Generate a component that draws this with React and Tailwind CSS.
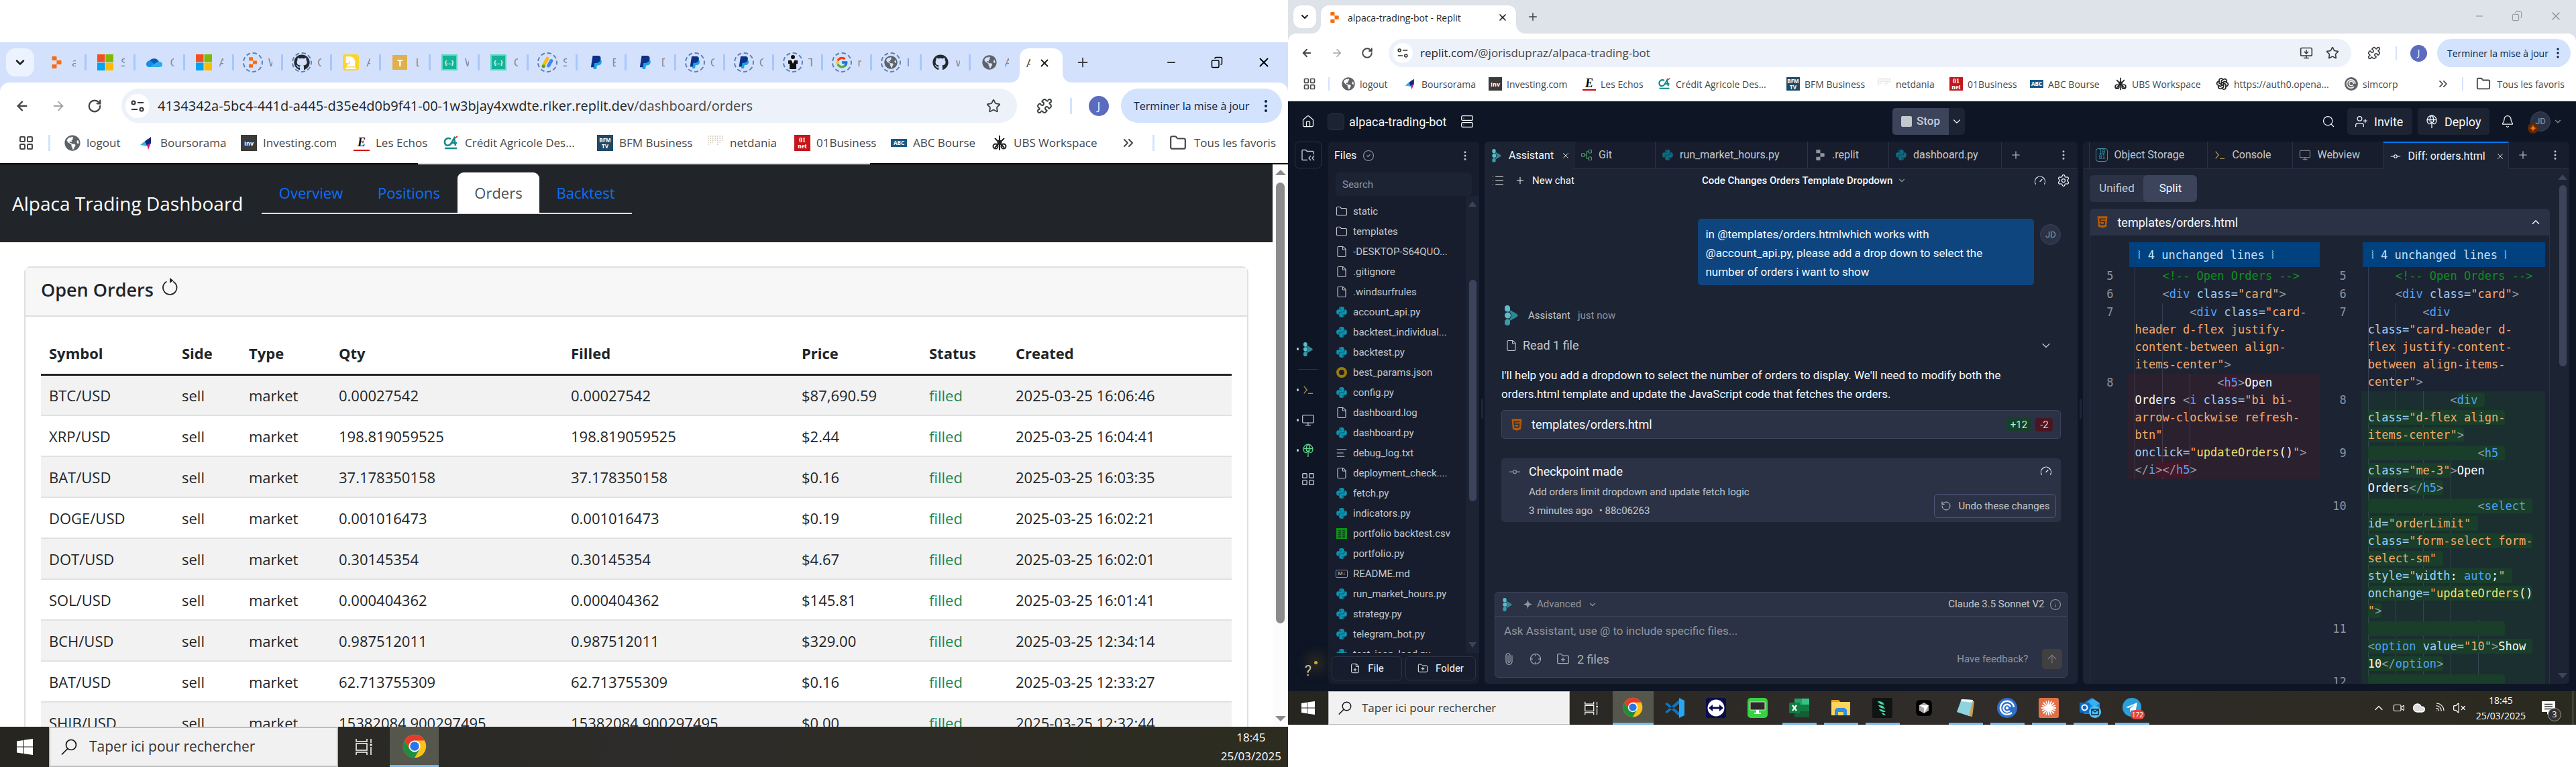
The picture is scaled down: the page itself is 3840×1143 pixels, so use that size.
import React from "react";
import {
  House, Search, UserPlus, Bell, ChevronDown, ChevronUp, Plus, X, Paperclip, Crosshair, FolderPlus,
  FilePlus, Star, Puzzle, Gauge, Settings, List, GitCommitHorizontal, RotateCcw, RotateCw, Info,
  ArrowUp, ArrowLeft, ArrowRight, Monitor, CircleCheck, Folder, File, LayoutGrid, MonitorDown, Minus,
  EllipsisVertical, Server, ChevronsRight, AlignLeft, Copy, Network, Wifi, VolumeX, Cloud, Video,
} from "lucide-react";
import { FaGithub, FaPython, FaHtml5, FaChessKnight, FaGlobeAmericas } from "react-icons/fa";
import { FcGoogle } from "react-icons/fc";
import { TbBrandOpenai } from "react-icons/tb";

/* ---------- drawings ---------- */

function ReplitLogo({ className }) {
  return (
    <svg viewBox="0 0 14 18" className={className} fill="currentColor" aria-hidden="true">
      <path d="M1 0h5a1 1 0 0 1 1 1v5H1a1 1 0 0 1-1-1V1a1 1 0 0 1 1-1zM7 6h6a1 1 0 0 1 1 1v4a1 1 0 0 1-1 1H7zM0 13a1 1 0 0 1 1-1h6v5a1 1 0 0 1-1 1H1a1 1 0 0 1-1-1z" />
    </svg>
  );
}

function AssistantLogo({ className }) {
  return (
    <svg viewBox="0 0 20 30" className={className} aria-hidden="true">
      <path fill="#5bbdcc" d="M0 4a4 4 0 0 1 8 0v3c0 2-2 2.600-4 2.600S0 8 0 6z" />
      <circle cx="4.500" cy="15" r="4.500" fill="#5bbdcc" />
      <path fill="#3c9aa9" d="M0 26a4 4 0 0 0 8 0v-3c0-2-2-2.600-4-2.600S0 22 0 24z" />
      <path fill="#2f8795" d="M9 7c2 3 9 4 11 8-2 4-9 5-11 8l-2-3c4-2 4-8 0-10z" />
    </svg>
  );
}

function MicrosoftLogo({ className }) {
  return (
    <svg viewBox="0 0 24 24" className={className} aria-hidden="true">
      <path fill="#f25022" d="M0 0h11.500v11.500H0z" />
      <path fill="#7fba00" d="M12.500 0H24v11.500H12.500z" />
      <path fill="#00a4ef" d="M0 12.500h11.500V24H0z" />
      <path fill="#ffb900" d="M12.500 12.500H24V24H12.500z" />
    </svg>
  );
}

function OneDriveLogo({ className }) {
  return (
    <svg viewBox="0 0 24 24" className={className} aria-hidden="true">
      <path fill="#0a5dbb" d="M4 12a8 8 0 0 1 15-1l-9 7z" />
      <path fill="#1a8de0" d="M0 15a5 5 0 0 1 7-5l10 9H4a4.500 4.500 0 0 1-4-4z" />
      <path fill="#2fa9ee" d="M24 15a4 4 0 0 1-4 4H5l12-8c4-1 7 1 7 4z" />
    </svg>
  );
}

function PaypalLogo({ className }) {
  return (
    <svg viewBox="0 0 20 22" className={className} aria-hidden="true">
      <path fill="#1da1e6" d="M7 6h9c3 1 3 4 2 7-1 2-3 3-6 3h-1l-1 6H5z" />
      <path fill="#0b3188" d="M4 0h8c4 0 6 2 5 6s-4 6-7 6H7l-1 7H1z" />
    </svg>
  );
}

function ChromeLogo({ className }) {
  return (
    <svg viewBox="0 0 48 48" className={className} aria-hidden="true">
      <circle cx="24" cy="24" r="23" fill="#fbc116" />
      <path fill="#e33b2e" d="M4.100 12.500A23 23 0 0 1 43.900 12.500H24L14 29.700z" />
      <path fill="#1e8e3e" d="M4.100 12.500 14 29.700 24 35.500l10-5.800-10 17.300A23 23 0 0 1 4.100 12.500z" />
      <circle cx="24" cy="24" r="11.500" fill="#fff" />
      <circle cx="24" cy="24" r="9" fill="#2a76e8" />
    </svg>
  );
}

function WindowsLogo({ className }) {
  return (
    <svg viewBox="0 0 24 24" className={className} fill="#fff" aria-hidden="true">
      <path d="M0 3.500 10 2v9.500H0zM11 1.800 24 0v11.500H11zM0 12.500h10V22L0 20.500zM11 12.500h13V24l-13-1.800z" />
    </svg>
  );
}

function TaskViewIcon({ className }) {
  return (
    <svg viewBox="0 0 26 26" className={className} fill="none" stroke="#fff" strokeWidth="1.500" aria-hidden="true">
      <path d="M1 1v4h16V1M1 8h16v10H1zM1 25v-4h16v4M23 1v6M23 13v12" />
      <path d="M21.500 10h3" strokeWidth="3" />
    </svg>
  );
}

function MagnifierIcon({ className }) {
  return (
    <svg viewBox="0 0 24 24" className={className} fill="none" stroke="#111" strokeWidth="1.700" aria-hidden="true">
      <circle cx="15" cy="9" r="7.500" />
      <path d="M10 14.500 1 23.500" />
    </svg>
  );
}

function SiteSettingsIcon({ className }) {
  return (
    <svg viewBox="0 0 20 20" className={className} fill="none" stroke="#303134" strokeWidth="2" aria-hidden="true">
      <circle cx="4" cy="5" r="2.500" />
      <path d="M10 5h9M1 15h9" />
      <circle cx="16" cy="15" r="2.500" />
    </svg>
  );
}

/* Curved feet on both sides of the active browser tab. */
function TabFeet() {
  return (
    <>
      <svg viewBox="0 0 14 14" className="absolute bottom-0 -left-[14px] size-[14px]" fill="#fff" aria-hidden="true"><path d="M14 0v14H0C8 14 14 8 14 0z" /></svg>
      <svg viewBox="0 0 14 14" className="absolute -right-[14px] bottom-0 size-[14px]" fill="#fff" aria-hidden="true"><path d="M0 0v14h14C6 14 0 8 0 0z" /></svg>
    </>
  );
}

function Ring({ children }) {
  return (
    <span className="grid size-[30px] place-items-center rounded-full border-2 border-dashed border-[#5f7fb5]">
      {children}
    </span>
  );
}

function BoursoramaIcon({ className }) {
  return (
    <svg viewBox="0 0 24 24" className={className} aria-hidden="true">
      <path fill="#2fb4e9" d="M3 15 15 5v12z" />
      <path fill="#17257c" d="M10 10 19 3v10l-6 3z" />
      <path fill="#e5197f" d="m13 15 6-3-4 10z" />
    </svg>
  );
}

function InvestingIcon() {
  return <span className="grid size-full place-items-center bg-[#3a3a3a] text-[9px] leading-none font-bold text-white">Inv</span>;
}
function EchosIcon() {
  return <span className="grid size-full place-items-center border-b-2 border-[#d40012] font-['Liberation_Serif',serif] text-[18px] leading-none font-bold text-black italic">E</span>;
}
function AgricoleIcon({ className }) {
  return (
    <svg viewBox="0 0 24 24" className={className} fill="none" aria-hidden="true">
      <path stroke="#138a85" strokeWidth="2.500" d="M12 6C7 3 2 7 3 12s7 5 10 0l4-7 2 11M12 12h9M3 20h18" />
      <path stroke="#e5333a" strokeWidth="2" d="m18 5 4-3" />
    </svg>
  );
}
function BfmIcon() {
  return (
    <span className="flex size-full flex-col items-center justify-center bg-[#1f4a66] text-[8px] leading-[9px] font-bold text-white">
      <span>BFM</span>
      <span>TV</span>
    </span>
  );
}
function NetdaniaIcon({ className }) {
  return (
    <svg viewBox="0 0 24 24" className={className} stroke="#c9c0ac" strokeWidth="1.500" strokeDasharray="1.500 2" aria-hidden="true">
      <path d="M0 2h24M0 5h24M0 8h24M0 11h8M14 11h6M0 14h4M14 14h3" />
    </svg>
  );
}
function NetIcon() {
  return (
    <span className="flex size-full flex-col items-center justify-center bg-[#c4161c] font-['Liberation_Serif',serif] text-[10px] leading-[9px] font-bold text-white">
      <span>01</span>
      <span>net</span>
    </span>
  );
}
function AbcIcon() {
  return <span className="grid h-3 w-full place-items-center bg-[#165a8c] text-[8px] leading-none font-bold text-white">ABC</span>;
}
function UbsIcon({ className }) {
  return (
    <svg viewBox="0 0 24 24" className={className} fill="none" stroke="#222" strokeWidth="2" aria-hidden="true">
      <path d="M12 1v22M5 5l14 14M19 5 5 19" />
      <circle cx="6" cy="17" r="3.500" />
      <circle cx="18" cy="17" r="3.500" />
      <circle cx="12" cy="11" r="2.500" />
    </svg>
  );
}
function SimcorpIcon({ className }) {
  return (
    <svg viewBox="0 0 24 24" className={className} fill="none" stroke="#eee" strokeWidth="2" aria-hidden="true">
      <circle cx="12" cy="12" r="12" fill="#5f6063" stroke="none" />
      <path d="M17 17a7.500 7.500 0 1 1 2-5M15 14a4 4 0 1 1 1-2M12 12h0" />
    </svg>
  );
}
function GlobeIcon({ className }) {
  return <FaGlobeAmericas className={className} color="#5f6368" aria-hidden="true" />;
}
function TealCode() {
  return <span className="grid size-6 place-items-center border-2 border-[#58dcbf] bg-[#14b398] text-[8px] font-bold text-white">{"{…}"}</span>;
}
function AdsIcon() {
  return (
    <svg viewBox="0 0 24 24" className="size-5" fill="none" strokeWidth="6" strokeLinecap="round" aria-hidden="true">
      <path stroke="#fbbc04" d="M5 18 12 5" />
      <path stroke="#4285f4" d="m14 18 5-9" />
      <circle cx="5" cy="19" r="3" fill="#34a853" />
    </svg>
  );
}
function SuitIcon() {
  return (
    <svg viewBox="0 0 24 24" className="size-6" fill="#111" aria-hidden="true">
      <circle cx="12" cy="4" r="3" />
      <path d="M5 9h14v5h-2v8H7v-8H5z" />
      <path fill="#fff" d="m10 9 2 5 2-5z" />
    </svg>
  );
}
function Dots({ className }) {
  return <EllipsisVertical className={className} aria-hidden="true" />;
}

/* ---------- shared browser parts ---------- */

const GLYPH = {
  globe: GlobeIcon, bourse: BoursoramaIcon, inv: InvestingIcon, echos: EchosIcon, ca: AgricoleIcon,
  bfm: BfmIcon, netdania: NetdaniaIcon, net: NetIcon, abc: AbcIcon, ubs: UbsIcon,
  openai: ({ className }) => <TbBrandOpenai className={className} color="#222" />, simcorp: SimcorpIcon,
};

function Bookmark({ label, icon, width, large }) {
  const Icon = GLYPH[icon];
  return (
    <a href="#" className={`${width} flex shrink-0 items-center whitespace-nowrap ${large ? "gap-[9px]" : "gap-[7px]"}`}>
      <span className={`flex shrink-0 items-center justify-center ${large ? "size-6" : "size-5"}`}>
        <Icon className={large ? "size-6" : "size-5"} />
      </span>
      {label}
    </a>
  );
}

const LEFT_MARKS = [
  ["logout", "globe", "w-[110px]"], ["Boursorama", "bourse", "w-[153px]"], ["Investing.com", "inv", "w-[168px]"],
  ["Les Echos", "echos", "w-[133px]"], ["Crédit Agricole Des...", "ca", "w-[230px]"], ["BFM Business", "bfm", "w-[165px]"],
  ["netdania", "netdania", "w-[129px]"], ["01Business", "net", "w-[144px]"], ["ABC Bourse", "abc", "w-[150px]"],
  ["UBS Workspace", "ubs", "w-[160px]"],
];
const RIGHT_MARKS = [
  ["logout", "globe", "w-[92px]"], ["Boursorama", "bourse", "w-[127px]"], ["Investing.com", "inv", "w-[140px]"],
  ["Les Echos", "echos", "w-[112px]"], ["Crédit Agricole Des...", "ca", "w-[192px]"], ["BFM Business", "bfm", "w-[136px]"],
  ["netdania", "netdania", "w-[107px]"], ["01Business", "net", "w-[120px]"], ["ABC Bourse", "abc", "w-[125px]"],
  ["UBS Workspace", "ubs", "w-[152px]"], ["https://auth0.opena...", "openai", "w-[192px]"], ["simcorp", "simcorp", "w-[90px]"],
];

/* ---------- left window ---------- */

const TABS = [
  [<ReplitLogo className="h-[18px] w-[15px] text-[#fd6a0a]" />, "a"],
  [<MicrosoftLogo className="size-6" />, "S"],
  [<OneDriveLogo className="size-6" />, "O"],
  [<MicrosoftLogo className="size-6" />, "A"],
  [<Ring><ReplitLogo className="h-4 w-3 text-[#fd6a0a]" /></Ring>, "W"],
  [<Ring><FaGithub className="size-6" color="#24292f" /></Ring>, "O"],
  [<span className="grid size-6 place-items-center rounded bg-[#fcd527]"><FaChessKnight className="size-5" color="#fff" /></span>, "A"],
  [<span className="grid size-[22px] place-items-center bg-[#dfb04d] text-[14px] font-bold text-white">T</span>, "L"],
  [<TealCode />, "W"],
  [<TealCode />, "O"],
  [<Ring><AdsIcon /></Ring>, "S"],
  [<PaypalLogo className="size-5" />, "E"],
  [<PaypalLogo className="size-5" />, "D"],
  [<Ring><PaypalLogo className="size-[18px]" /></Ring>, "O"],
  [<Ring><PaypalLogo className="size-[18px]" /></Ring>, "O"],
  [<Ring><SuitIcon /></Ring>, "T"],
  [<Ring><FcGoogle className="size-5" /></Ring>, "r"],
  [<Ring><GlobeIcon className="size-5" /></Ring>, "I"],
  [<FaGithub className="size-6" color="#24292f" />, "w"],
  [<GlobeIcon className="size-[22px]" />, "A"],
];

const ORDERS = [
  ["BTC/USD", "0.00027542", "$87,690.59", "2025-03-25 16:06:46"],
  ["XRP/USD", "198.819059525", "$2.44", "2025-03-25 16:04:41"],
  ["BAT/USD", "37.178350158", "$0.16", "2025-03-25 16:03:35"],
  ["DOGE/USD", "0.001016473", "$0.19", "2025-03-25 16:02:21"],
  ["DOT/USD", "0.30145354", "$4.67", "2025-03-25 16:02:01"],
  ["SOL/USD", "0.000404362", "$145.81", "2025-03-25 16:01:41"],
  ["BCH/USD", "0.987512011", "$329.00", "2025-03-25 12:34:14"],
  ["BAT/USD", "62.713755309", "$0.16", "2025-03-25 12:33:27"],
  ["SHIB/USD", "15382084.900297495", "$0.00", "2025-03-25 12:32:44"],
];

function LeftBrowser() {
  return (
    <header className="shrink-0 bg-[#d3e1fd] text-[#3c4043]">
      <div className="flex h-[60px] items-center pl-[9px]">
        <button aria-label="Search tabs" className="mr-[5px] grid size-[42px] shrink-0 place-items-center rounded-[14px] bg-[#ecf2fe]">
          <ChevronDown className="size-5 text-[#1f1f1f]" strokeWidth={3} />
        </button>
        <div className="flex min-w-0 flex-1 items-center">
          {TABS.map(([icon, letter], i) => (
            <button key={i} className="flex h-6 min-w-0 flex-1 items-center border-r-[3px] border-[#a8c7fa] pl-[13px] last:border-transparent">
              <span className="flex w-[30px] shrink-0 justify-center">{icon}</span>
              <span className="ml-2 w-[6px] overflow-hidden text-left text-[17px] leading-6 text-[#7a8599]">{letter}</span>
            </button>
          ))}
        </div>
        <button className="relative mt-[9px] flex h-[51px] w-16 shrink-0 items-center gap-3 rounded-t-[14px] bg-white pb-2 pl-[10px]">
          <TabFeet />
          <span className="w-[6px] overflow-hidden text-[17px]">A</span>
          <X className="size-[18px] text-[#1f1f1f]" strokeWidth={2.500} />
        </button>
        <button aria-label="New tab" className="mr-[112px] ml-[19px] shrink-0"><Plus className="size-[22px]" /></button>
        <div className="flex shrink-0 items-center gap-[50px] pr-[25px] text-black">
          <button aria-label="Minimize"><Minus className="size-[18px]" /></button>
          <button aria-label="Restore"><Copy className="size-[18px] -scale-x-100" /></button>
          <button aria-label="Close"><X className="size-[22px]" /></button>
        </div>
      </div>
      <div className="rounded-t-[14px] bg-white">
        <div className="flex items-center pt-[9px] pl-[22px]">
          <div className="flex shrink-0 items-center gap-8 text-[#474747]">
            <button aria-label="Back"><ArrowLeft className="size-[22px]" strokeWidth={2.500} /></button>
            <button aria-label="Forward"><ArrowRight className="size-[22px] text-[#a5a5a5]" /></button>
            <button aria-label="Reload"><RotateCw className="size-[22px]" strokeWidth={2.500} /></button>
          </div>
          <div className="ml-[29px] flex h-[51px] min-w-0 flex-1 items-center rounded-full bg-[#ecf1fa] pr-6 pl-[6px]">
            <span className="grid size-9 shrink-0 place-items-center rounded-full bg-white"><SiteSettingsIcon className="size-5" /></span>
            <p className="ml-3 min-w-0 flex-1 text-[20px] whitespace-nowrap text-[#474747]">
              <span className="text-[#1f1f1f]">4134342a-5bc4-441d-a445-d35e4d0b9f41-00-1w3bjay4xwdte.riker.replit.dev</span>/dashboard/orders
            </p>
            <Star className="size-[22px]" />
          </div>
          <Puzzle className="mr-[26px] ml-[29px] size-6 shrink-0" />
          <span className="mr-[25px] h-6 w-[3px] shrink-0 bg-[#d3e3fd]" />
          <button aria-label="Profile" className="mr-[18px] size-[30px] shrink-0 rounded-full bg-[#5c6bc0] text-[16px] text-white">J</button>
          <button className="mr-[9px] flex h-[51px] w-60 shrink-0 items-center justify-between rounded-full bg-[#d3e3fd] pr-3 pl-[19px] text-[16px] whitespace-nowrap text-[#041e49]">
            Terminer la mise à jour <Dots className="size-6" />
          </button>
        </div>
        <nav className="flex h-[60px] items-center overflow-hidden pl-[27px] text-[17px] text-[#474747]">
          <LayoutGrid className="size-6 shrink-0" />
          <span className="mr-[21px] ml-[21px] h-6 w-[3px] shrink-0 bg-[#d3e3fd]" />
          {LEFT_MARKS.map(([l, i, w]) => <Bookmark key={l} label={l} icon={i} width={w} large />)}
          <button aria-label="More bookmarks" className="ml-auto shrink-0"><ChevronsRight className="size-6" /></button>
          <span className="mr-[22px] ml-6 h-6 w-[3px] shrink-0 bg-[#d3e3fd]" />
          <a href="#" className="mr-[18px] flex shrink-0 items-center gap-[11px] whitespace-nowrap"><Folder className="size-[26px]" />Tous les favoris</a>
        </nav>
        <div className="flex h-[2px]">
          <span className="w-[623px] bg-black" />
          <span className="w-[674px] bg-[#e4e4e4]" />
          <span className="flex-1 bg-black" />
        </div>
      </div>
    </header>
  );
}

function Dashboard() {
  return (
    <div className="flex min-h-0 flex-1">
      <div className="min-w-0 flex-1 overflow-hidden bg-white text-[#212529]">
        <div className="flex h-[116px] items-start bg-[#212529] pt-3 pl-[18px]">
          <a href="#" className="w-[372px] pt-[25px] text-[28px] leading-[42px] whitespace-nowrap text-white">Alpaca Trading Dashboard</a>
          <nav className="flex h-[62px] border-b-2 border-[#dee2e6] text-[22px] text-[#0d6efd]">
            <a href="#" className="grid w-[147px] place-items-center">Overview</a>
            <a href="#" className="grid w-[145px] place-items-center">Positions</a>
            <a href="#" aria-current="page" className="grid w-[122px] place-items-center rounded-t-[9px] bg-white text-[#495057]">Orders</a>
            <a href="#" className="grid w-[138px] place-items-center">Backtest</a>
          </nav>
        </div>
        <section className="mx-9 mt-9 rounded-[9px] border-2 border-[#dfdfdf]">
          <div className="flex h-[73px] gap-3 border-b-2 border-[#dfdfdf] bg-[#f7f7f7] pt-3 pl-[23px]">
            <h1 className="text-[27px] leading-[42px] font-semibold">Open Orders</h1>
            <button aria-label="Refresh orders" className="h-8">
              <svg viewBox="0 0 24 26" className="h-[26px] w-6" fill="none" stroke="#212529" strokeWidth="1.800">
                <path d="M7.500 5.500a10.300 10.300 0 1 0 9.500 0M12 4h4" />
                <path d="m12 0 5.500 4-5.500 4z" fill="#212529" stroke="none" />
              </svg>
            </button>
          </div>
          <div className="p-[23px]">
            <table className="w-full table-fixed text-left text-[22px] leading-9">
              <colgroup>
                <col className="w-[198px]" /><col className="w-[100px]" /><col className="w-[134px]" /><col className="w-[346px]" />
                <col className="w-[344px]" /><col className="w-[190px]" /><col className="w-[129px]" /><col />
              </colgroup>
              <thead>
                <tr className="h-[63px] border-b-3 border-[#212529]">
                  {["Symbol", "Side", "Type", "Qty", "Filled", "Price", "Status", "Created"].map((h) => (
                    <th key={h} scope="col" className="px-3 font-bold">{h}</th>
                  ))}
                </tr>
              </thead>
              <tbody>
                {ORDERS.map(([sym, qty, price, date], i) => (
                  <tr key={i} className="h-[61px] border-b-2 border-[#dee2e6] whitespace-nowrap odd:bg-[#f2f2f2]">
                    <td className="px-3">{sym}</td>
                    <td className="px-3">sell</td>
                    <td className="px-3">market</td>
                    <td className="px-3">{qty}</td>
                    <td className="px-3">{qty}</td>
                    <td className="px-3">{price}</td>
                    <td className="px-3 text-[#198754]">filled</td>
                    <td className="px-3">{date}</td>
                  </tr>
                ))}
              </tbody>
            </table>
          </div>
        </section>
      </div>
      <div className="flex w-[23px] flex-col items-center bg-[#fcfcfc] py-2">
        <span className="size-0 border-x-8 border-b-8 border-x-transparent border-b-[#8b8b8b]" />
        <span className="mt-[11px] h-[657px] w-[13px] rounded-full bg-[#8b8b8b]" />
        <span className="mt-auto size-0 border-x-8 border-t-8 border-x-transparent border-t-[#8b8b8b]" />
      </div>
    </div>
  );
}

function LeftTaskbar() {
  return (
    <footer className="flex h-[60px] shrink-0 items-stretch bg-linear-to-r from-[#26251f] via-[#2e2c2a] via-50% to-[#2d2c20] text-white">
      <button aria-label="Start" className="grid w-[73px] place-items-center"><WindowsLogo className="size-6" /></button>
      <label className="flex w-[431px] items-center gap-[18px] border-2 border-[#bdbdbd] bg-[#f1f1f1] pl-4">
        <MagnifierIcon className="size-6 shrink-0" />
        <input aria-label="Taper ici pour rechercher" placeholder="Taper ici pour rechercher" className="min-w-0 flex-1 text-[21px] text-black outline-none placeholder:text-[#333]" />
      </label>
      <button aria-label="Task view" className="grid w-[77px] place-items-center"><TaskViewIcon className="size-[26px]" /></button>
      <button aria-label="Chrome" className="grid w-[73px] place-items-center border-b-[3px] border-[#76b9ed] bg-[#55564c]"><ChromeLogo className="size-9" /></button>
      <div className="mr-[10px] ml-auto flex flex-col items-center justify-center text-[17px] leading-[28px]">
        <span>18:45</span>
        <span>25/03/2025</span>
      </div>
    </footer>
  );
}

/* ---------- right window ---------- */

function RightBrowser() {
  return (
    <header className="shrink-0 bg-[#dee2e9] text-[#3c4043]">
      <div className="flex h-[50px] items-end pl-2">
        <button aria-label="Search tabs" className="mr-[7px] mb-2 grid size-[34px] shrink-0 place-items-center rounded-xl bg-white">
          <ChevronDown className="size-4 text-[#1f1f1f]" strokeWidth={3} />
        </button>
        <button className="relative flex h-[42px] w-[291px] shrink-0 items-center rounded-t-xl bg-white pr-3 pb-[6px] pl-[14px] text-[14px] text-[#1f1f1f]">
          <TabFeet />
          <ReplitLogo className="mr-[13px] h-4 w-[13px] text-[#fd6a0a]" />
          <span className="whitespace-nowrap">alpaca-trading-bot - Replit</span>
          <X className="ml-auto size-4" strokeWidth={2.500} />
        </button>
        <button aria-label="New tab" className="mb-4 ml-4"><Plus className="size-[18px]" /></button>
        <div className="mr-5 mb-4 ml-auto flex items-center gap-10 text-[#8b8e93]">
          <button aria-label="Minimize"><Minus className="size-4" strokeWidth={1.500} /></button>
          <button aria-label="Restore"><Copy className="size-4 -scale-x-100" strokeWidth={1.500} /></button>
          <button aria-label="Close"><X className="size-5" strokeWidth={1.500} /></button>
        </div>
      </div>
      <div className="rounded-t-xl bg-white">
        <div className="flex items-center pt-2 pl-[19px]">
          <div className="flex shrink-0 items-center gap-[27px] text-[#474747]">
            <button aria-label="Back"><ArrowLeft className="size-[18px]" strokeWidth={2.500} /></button>
            <button aria-label="Forward"><ArrowRight className="size-[18px] text-[#a5a5a5]" /></button>
            <button aria-label="Reload"><RotateCw className="size-[18px]" strokeWidth={2.500} /></button>
          </div>
          <div className="ml-[23px] flex h-[42px] min-w-0 flex-1 items-center rounded-full bg-[#ecf1fa] pr-[18px] pl-[6px]">
            <span className="grid size-[30px] shrink-0 place-items-center rounded-full bg-white"><SiteSettingsIcon className="size-4" /></span>
            <p className="ml-[11px] min-w-0 flex-1 text-[17px] whitespace-nowrap text-[#474747]">
              <span className="text-[#1f1f1f]">replit.com</span>/@jorisdupraz/alpaca-trading-bot
            </p>
            <MonitorDown className="mr-[19px] size-5" />
            <Star className="size-5" />
          </div>
          <Puzzle className="mr-[22px] ml-6 size-5 shrink-0" />
          <span className="mr-[20px] h-5 w-[2px] shrink-0 bg-[#d3e3fd]" />
          <button aria-label="Profile" className="mr-[15px] size-[25px] shrink-0 rounded-full bg-[#5c6bc0] text-[13px] text-white">J</button>
          <button className="mr-2 flex h-[42px] w-[199px] shrink-0 items-center justify-between rounded-full bg-[#d3e3fd] pr-[9px] pl-[15px] text-[14px] whitespace-nowrap text-[#041e49]">
            Terminer la mise à jour <Dots className="size-5" />
          </button>
        </div>
        <nav className="flex h-[51px] items-center overflow-hidden border-b border-[#dfe4e4] pl-[22px] text-[14px] text-[#474747]">
          <LayoutGrid className="size-5 shrink-0" />
          <span className="mr-[18px] ml-[18px] h-5 w-[2px] shrink-0 bg-[#d3e3fd]" />
          {RIGHT_MARKS.map(([l, i, w]) => <Bookmark key={l} label={l} icon={i} width={w} />)}
          <button aria-label="More bookmarks" className="ml-auto shrink-0"><ChevronsRight className="size-5" /></button>
          <span className="mr-[19px] ml-[18px] h-5 w-[2px] shrink-0 bg-[#d3e3fd]" />
          <a href="#" className="mr-[17px] flex shrink-0 items-center gap-[9px] whitespace-nowrap"><Folder className="size-[22px]" />Tous les favoris</a>
        </nav>
      </div>
    </header>
  );
}

function WorkspaceHeader() {
  return (
    <div className="flex h-[60px] shrink-0 items-center pr-5 pl-5 text-[18px]">
      <a href="#" aria-label="Home"><House className="size-5" strokeWidth={1.500} /></a>
      <span className="ml-[19px] size-[25px] rounded-[5px] border border-[#2b3245] bg-[#1c2333]" />
      <span className="ml-[7px] w-[147px] whitespace-nowrap">alpaca-trading-bot</span>
      <Server className="ml-[19px] size-5" strokeWidth={1.500} />
      <div className="ml-[624px] flex h-10 items-stretch overflow-hidden rounded-[5px]">
        <button className="flex w-[84px] items-center gap-[7px] bg-[#3c445c] pl-[13px] text-[17px] font-medium text-[#c9ced3]">
          <span className="size-4 rounded-[2px] bg-[#c2c8cc]" />Stop
        </button>
        <button aria-label="Run options" className="grid w-6 place-items-center bg-[#1c2333]"><ChevronDown className="size-[18px]" strokeWidth={1.500} /></button>
      </div>
      <button aria-label="Search" className="ml-auto"><Search className="size-5" strokeWidth={1.500} /></button>
      <button className="ml-[18px] flex h-10 w-[97px] items-center gap-[9px] rounded-[5px] bg-[#1c2333] pl-[11px]"><UserPlus className="size-5" strokeWidth={1.500} />Invite</button>
      <button className="ml-2 flex h-10 w-[107px] items-center gap-[9px] rounded-[5px] bg-[#1c2333] pl-[11px]"><DeployIcon className="size-5" />Deploy</button>
      <button aria-label="Notifications" className="ml-[17px]"><Bell className="size-5" strokeWidth={1.500} /></button>
      <button aria-label="Account" className="relative ml-6 flex items-center gap-1 text-[#8f959d]">
        <span className="grid size-[30px] place-items-center rounded-full border border-[#3c445c] bg-[#2b3245] text-[13px]">JD</span>
        <span className="absolute top-[17px] -left-1 grid size-4 place-items-center rounded-full bg-[#5a2a06]"><Sparkle className="size-3 text-[#ff6a1a]" /></span>
        <ChevronDown className="size-[14px]" />
      </button>
    </div>
  );
}

function Sparkle({ className }) {
  return (
    <svg viewBox="0 0 20 20" className={className} fill="currentColor" aria-hidden="true">
      <path d="M10 0c.6 6.500 3.500 9.400 10 10-6.500.6-9.400 3.500-10 10-.6-6.500-3.500-9.400-10-10C6.500 9.400 9.400 6.500 10 0z" />
    </svg>
  );
}

function DeployIcon({ className }) {
  return (
    <svg viewBox="0 0 20 20" className={className} fill="none" stroke="currentColor" strokeWidth="1.300" aria-hidden="true">
      <path d="M6 14A7 7 0 1 1 14 14M3.500 7.500h13M10 1c-3 3-3 7-2.500 10M10 1c3 3 3 7 2.500 10M10 20v-9M6.500 14 10 10.500l3.500 3.500" />
    </svg>
  );
}

function ConsoleIcon({ className }) {
  return (
    <svg viewBox="0 0 18 18" className={className} fill="none" stroke="#a8904e" strokeWidth="1.500" aria-hidden="true">
      <path d="m2 3 5 6-5 6M9 15h8" />
    </svg>
  );
}

function StorageIcon({ className }) {
  return (
    <span className={`${className} flex flex-col items-center justify-center rounded border border-[#3c93a3] font-['DejaVu_Sans_Mono',monospace] text-[8px] leading-[8px] text-[#3c93a3]`}>
      <span>10</span>
      <span>01</span>
    </span>
  );
}

const FILES = [
  ["static", "dir"], ["templates", "dir"], ["-DESKTOP-S64QUO...", "file"], [".gitignore", "file"], [".windsurfrules", "file"],
  ["account_api.py", "py"], ["backtest_individual...", "py"], ["backtest.py", "py"], ["best_params.json", "json"], ["config.py", "py"],
  ["dashboard.log", "file"], ["dashboard.py", "py"], ["debug_log.txt", "txt"], ["deployment_check....", "file"], ["fetch.py", "py"],
  ["indicators.py", "py"], ["portfolio backtest.csv", "csv"], ["portfolio.py", "py"], ["README.md", "md"], ["run_market_hours.py", "py"],
  ["strategy.py", "py"], ["telegram_bot.py", "py"], ["test_json_load.py", "py"],
];

function FileGlyph({ kind }) {
  if (kind === "dir") return <Folder className="size-5" strokeWidth={1.500} />;
  if (kind === "py") return <FaPython className="size-[18px]" color="#0a94b0" />;
  if (kind === "txt") return <AlignLeft className="size-[18px]" strokeWidth={1.500} />;
  if (kind === "json") return <span className="size-4 rounded-full border-4 border-[#9c7c0a]" />;
  if (kind === "csv")
    return (
      <svg viewBox="0 0 16 16" className="size-4" aria-hidden="true">
        <path fill="#0a9414" d="M0 0h16v16H0z" />
        <path stroke="#0d3a1a" strokeWidth="1.500" d="M3 4h4M9 4h4M3 7h4M9 7h4M3 10h4M9 10h4M3 13h4M9 13h4" />
      </svg>
    );
  if (kind === "md") return <span className="grid h-3 w-[18px] place-items-center rounded-[2px] border border-[#8f959d] text-[8px] leading-none">M↓</span>;
  return <File className="size-5" strokeWidth={1.500} />;
}

function RailLink({ label, first, children }) {
  return (
    <a href="#" aria-label={label} className={`${first ? "" : "mt-[15px]"} flex h-[30px] w-full items-center pl-[13px]`}>
      <span className="h-1 w-[3px] rounded-full bg-[#c2c8cc]" />
      <span className="flex w-7 justify-center">{children}</span>
    </a>
  );
}

function Rail() {
  return (
    <nav className="flex w-[60px] shrink-0 flex-col items-center text-[#c2c8cc]">
      <button aria-label="Collapse files" className="mb-[239px] grid size-10 shrink-0 place-items-center rounded-md border border-[#2b3245]">
        <svg viewBox="0 0 20 20" className="size-5" fill="none" stroke="currentColor" strokeWidth="1.400" aria-hidden="true">
          <path d="M9 17.500H2a1 1 0 0 1-1-1v-13a1 1 0 0 1 1-1h4.500l2 2H17a1 1 0 0 1 1 1V9M14 11l-3 3.500 3 3.500M19 11l-3 3.500 3 3.500" />
        </svg>
      </button>
      <RailLink label="Assistant"><AssistantLogo className="h-[21px] w-[14px]" /></RailLink>
      <span className="my-[15px] h-px w-[30px] bg-[#2b3245]" />
      <RailLink label="Console" first><ConsoleIcon className="size-[16px]" /></RailLink>
      <RailLink label="Webview"><Monitor className="size-5" strokeWidth={1.500} /></RailLink>
      <RailLink label="Deployments"><DeployIcon className="size-5 text-[#5ed58a]" /></RailLink>
      <a href="#" aria-label="All tools" className="mt-[13px] grid size-[30px] place-items-center"><LayoutGrid className="size-[22px]" strokeWidth={1.500} /></a>
      <button aria-label="Help" className="relative mt-auto mb-[6px] text-[22px] leading-[26px]">
        ?
        <span className="absolute -top-[2px] left-[14px] size-[5px] rounded-full bg-[#d0ab2b] shadow-[0_0_20px_8px_rgba(150,120,20,0.35)]" />
      </button>
    </nav>
  );
}

function FilesPanel() {
  return (
    <aside className="flex w-[225px] shrink-0 flex-col rounded-md bg-[#171d2d] text-[15px] text-[#c2c8cc]">
      <div className="flex h-[42px] shrink-0 items-center pr-3 pl-[9px]">
        <h2 className="text-[16px] text-[#f5f9fc]">Files</h2>
        <CircleCheck className="ml-[9px] size-[18px] text-[#8f959d]" strokeWidth={1.500} />
        <button aria-label="Files menu" className="ml-auto"><Dots className="size-[18px]" /></button>
      </div>
      <input type="search" aria-label="Search files" placeholder="Search" className="mx-[11px] mt-1 h-[35px] shrink-0 rounded-md bg-[#1c2333] px-[10px] outline-none placeholder:text-[#8f959d]" />
      <div className="flex min-h-0 flex-1">
        <ul className="min-w-0 flex-1 overflow-hidden pt-2 pl-[11px]">
          {FILES.map(([name, kind]) => (
            <li key={name} className="flex h-[30px] items-center gap-2 whitespace-nowrap">
              <span className="flex w-[18px] shrink-0 justify-center"><FileGlyph kind={kind} /></span>
              {name}
            </li>
          ))}
        </ul>
        <div className="flex w-5 flex-col items-center bg-[#1c2333] py-2">
          <span className="size-0 border-x-[6px] border-b-8 border-x-transparent border-b-[#3c445c]" />
          <span className="mt-[109px] h-[330px] w-[11px] rounded-full bg-[#3c445c]" />
          <span className="mt-auto size-0 border-x-[6px] border-t-8 border-x-transparent border-t-[#3c445c]" />
        </div>
      </div>
      <div className="flex shrink-0 gap-[5px] p-[5px] text-[15px] text-[#f5f9fc]">
        <button className="flex h-9 flex-1 items-center justify-center gap-[11px] rounded-md border border-[#2b3245]"><FilePlus className="size-4" strokeWidth={1.500} />File</button>
        <button className="flex h-9 flex-1 items-center justify-center gap-[11px] rounded-md border border-[#2b3245]"><FolderPlus className="size-4" strokeWidth={1.500} />Folder</button>
      </div>
    </aside>
  );
}

function Splitter() {
  return (
    <div className="grid w-2 shrink-0 place-items-center pb-[12px]"><span className="h-[30px] w-[3px] rounded-full bg-[#1f2638]" /></div>
  );
}

function PaneTab({ width, icon, label, active, line }) {
  const tone = active ? "bg-[#1c2333] text-[#f5f9fc]" : "border-b bg-[#171d2d] text-[#c2c8cc]";
  const top = line ? "border-t-2 border-t-[#0079f2]" : "";
  return (
    <button className={`${width} ${tone} ${top} flex h-full shrink-0 items-center gap-[9px] overflow-hidden border-r border-[#2b3245] pl-[9px] whitespace-nowrap`}>
      <span className="flex w-[18px] shrink-0 justify-center">{icon}</span>
      {label}
      {active && <X className="mr-[5px] ml-auto size-[14px] shrink-0" strokeWidth={1.500} />}
    </button>
  );
}

function PaneTabsEnd() {
  return (
    <div className="flex flex-1 items-center justify-between border-b border-[#2b3245] bg-[#171d2d] px-3 text-[#c2c8cc]">
      <button aria-label="New tab"><Plus className="size-[18px]" strokeWidth={1.500} /></button>
      <button aria-label="Pane menu"><Dots className="size-[18px]" /></button>
    </div>
  );
}

function AssistantPane() {
  return (
    <section className="flex min-w-0 flex-[885] flex-col overflow-hidden rounded-md bg-[#1c2333]">
      <div className="flex h-[41px] shrink-0 text-[16px]">
        <PaneTab width="w-[134px]" active icon={<AssistantLogo className="h-5 w-[14px]" />} label="Assistant" />
        <PaneTab width="w-[121px]" icon={<Network className="size-[18px] -rotate-90 text-[#4b9a63]" strokeWidth={1.500} />} label="Git" />
        <PaneTab width="w-[227px]" icon={<FaPython className="size-[18px]" color="#0d6b80" />} label="run_market_hours.py" />
        <PaneTab width="w-[121px]" icon={<ReplitLogo className="h-4 w-[13px] text-[#8f959d]" />} label=".replit" />
        <PaneTab width="w-[168px]" icon={<FaPython className="size-[18px]" color="#0d6b80" />} label="dashboard.py" />
        <PaneTabsEnd />
      </div>
      <div className="flex h-[34px] shrink-0 items-center pr-[11px] pl-[10px] text-[15px]">
        <button aria-label="Chat list" className="text-[#c2c8cc]"><List className="size-5" strokeWidth={1.500} /></button>
        <button className="ml-[15px] flex items-center gap-[10px] whitespace-nowrap"><Plus className="size-4" strokeWidth={1.500} />New chat</button>
        <button className="mx-auto flex items-center gap-[7px] font-medium whitespace-nowrap">Code Changes Orders Template Dropdown<ChevronDown className="size-[14px] text-[#8f959d]" /></button>
        <button aria-label="Usage"><Gauge className="size-[18px]" strokeWidth={1.500} /></button>
        <button aria-label="Settings" className="ml-4"><Settings className="size-5" strokeWidth={1.500} /></button>
      </div>
      <div className="min-h-0 flex-1 overflow-hidden px-[25px] pt-[40px] text-[17px] leading-7">
        <div className="flex items-start justify-end">
          <p className="w-[501px] rounded-[5px] bg-[#0f457f] px-[11px] pt-[9px] pb-[6px]">
            in @templates/orders.htmlwhich works with<br />
            @account_api.py, please add a drop down to select the<br />
            number of orders i want to show
          </p>
          <span className="mt-2 ml-[9px] grid size-[31px] place-items-center rounded-full border border-[#3c445c] bg-[#2b3245] text-[13px] text-[#8f959d]">JD</span>
        </div>
        <div className="mt-[30px] flex h-[30px] items-center pl-[5px] text-[15px]">
          <AssistantLogo className="h-[30px] w-5" />
          <span className="ml-[15px] text-[#c2c8cc]">Assistant</span>
          <span className="ml-[11px] text-[#8f959d]">just now</span>
        </div>
        <button className="mt-[15px] flex h-[30px] w-full items-center pr-3 pl-[6px] text-[18px] text-[#c2c8cc]">
          <File className="mr-[8px] size-[18px]" strokeWidth={1.500} />Read 1 file
          <ChevronDown className="ml-auto size-5" strokeWidth={1.500} />
        </button>
        <p className="mt-[15px]">
          I'll help you add a dropdown to select the number of orders to display. We'll need to modify both the orders.html template and update the JavaScript code that fetches the orders.
        </p>
        <a href="#" className="mt-[10px] flex h-[43px] items-center rounded-[5px] border border-[#3c445c] bg-[#2b3245] pr-[11px] pl-3 text-[18px]">
          <FaHtml5 className="mr-3 size-5" color="#b55a06" />templates/orders.html
          <span className="ml-auto grid h-5 w-[38px] place-items-center rounded bg-[#183f2c] text-[15px] leading-5 text-[#b3f5c9]">+12</span>
          <span className="ml-[6px] grid h-5 w-[26px] place-items-center rounded bg-[#4a1622] text-[15px] leading-5 text-[#ffc2c2]">-2</span>
        </a>
        <div className="mt-[29px] flex h-[95px] justify-between rounded-[5px] bg-[#2b3245] pt-[6px] pr-[7px] pl-[10px]">
          <div className="flex gap-[11px]">
            <GitCommitHorizontal className="mt-1 size-5 text-[#8f959d]" strokeWidth={1.500} />
            <div className="text-[15px] text-[#c2c8cc]">
              <h3 className="text-[18px] text-[#f5f9fc]">Checkpoint made</h3>
              <p className="mt-[2px]">Add orders limit dropdown and update fetch logic</p>
              <p>3 minutes ago <span className="ml-[6px]">• 88c06263</span></p>
            </div>
          </div>
          <div className="flex flex-col items-end justify-between pt-1 pb-[6px]">
            <Gauge className="mr-[6px] size-[18px]" strokeWidth={1.500} />
            <button className="flex h-9 w-[182px] items-center justify-center gap-[10px] rounded-md border border-[#4f587a] text-[15px] text-[#c2c8cc]"><RotateCcw className="size-4" strokeWidth={1.500} />Undo these changes</button>
          </div>
        </div>
      </div>
      <form className="mx-[15px] mb-[9px] flex h-[128px] shrink-0 flex-col rounded-md border border-[#3c445c] bg-[#2b3245] text-[#8f959d]" onSubmit={(e) => e.preventDefault()}>
        <div className="flex h-9 items-center border-b border-[#3c445c] pr-2 pl-[11px] text-[15px]">
          <AssistantLogo className="h-5 w-[14px]" />
          <button type="button" className="ml-4 flex items-center gap-[6px]"><Sparkle className="size-[15px]" />Advanced<ChevronDown className="ml-1 size-[14px]" /></button>
          <span className="mr-2 ml-auto text-[#c2c8cc]">Claude 3.5 Sonnet V2</span>
          <Info className="size-[18px]" strokeWidth={1.500} />
        </div>
        <input aria-label="Ask Assistant" placeholder="Ask Assistant, use @ to include specific files..." className="mt-[7px] h-7 px-[13px] text-[17px] outline-none placeholder:text-[#8f959d]" />
        <div className="mt-auto mb-[9px] flex h-9 items-center pr-[7px] pl-[11px] text-[18px] text-[#a9afb6]">
          <button type="button" aria-label="Attach"><Paperclip className="size-[18px] -rotate-45" strokeWidth={1.500} /></button>
          <button type="button" aria-label="Target" className="ml-[22px]"><Crosshair className="size-[18px]" strokeWidth={1.500} /></button>
          <button type="button" className="ml-[22px] flex items-center gap-[11px]"><FolderPlus className="size-5" strokeWidth={1.500} />2 files</button>
          <a href="#" className="mr-[21px] ml-auto text-[15px] text-[#8f959d]">Have feedback?</a>
          <button aria-label="Send" className="grid size-[30px] place-items-center rounded-[5px] bg-[#403f41]"><ArrowUp className="size-5 text-[#77787c]" strokeWidth={1.500} /></button>
        </div>
      </form>
    </section>
  );
}

/* ---------- diff ---------- */

const Tag = ({ children }) => <span className="text-[#4fa3ff]">{children}</span>;
const Attr = ({ children }) => <span className="text-[#a3d0fb]">{children}</span>;
const Str = ({ children }) => <span className="text-[#f5aa6b]">{children}</span>;
const Pun = ({ children }) => <span className="text-[#959ba3]">{children}</span>;
const Fn = ({ children }) => <span className="text-[#efdf70]">{children}</span>;
const Add = ({ children }) => <span className="rounded bg-[#193e29] py-px">{children}</span>;
const Del = ({ children }) => <span className="rounded bg-[#45172a] py-px">{children}</span>;

const GUIDES = ["left-[10px]", "left-[51px]", "left-[92px]", "left-[133px]", "left-[174px]"];

function Row({ n, depth, tone = "", children }) {
  return (
    <div className="flex">
      <span className="w-[34px] shrink-0 text-right text-[#8f959d]">{n}</span>
      <div className={`${tone} relative ml-[22px] min-w-0 flex-1 overflow-hidden pb-px pl-[10px] whitespace-pre`}>
        {GUIDES.slice(0, depth).map((g) => <span key={g} className={`${g} absolute inset-y-0 w-px bg-[#8090b0]/25`} />)}
        {React.Children.map(children, (line) => <div className="relative">{line}</div>)}
      </div>
    </div>
  );
}

function Unchanged() {
  return (
    <button className="ml-[58px] flex h-[37px] w-[calc(100%-58px)] items-center bg-[#00417f] pl-[13px] whitespace-pre text-[#c5e1fb]">⦚ 4 unchanged lines ⦚</button>
  );
}

const comment = <span className="text-[#0e9020]">{"    <!-- Open Orders -->"}</span>;
const card = <span>{"    "}<Pun>&lt;</Pun><Tag>div</Tag> <Attr>class=</Attr><Str>"card"</Str><Pun>&gt;</Pun></span>;

function DiffCode() {
  const green = "bg-[#1b2e30]";
  return (
    <div className="grid grid-cols-[342fr_337fr] overflow-hidden border-x border-[#2b3245] pt-[10px] pr-[6px] font-['DejaVu_Sans_Mono',monospace] text-[17px] leading-[26px] text-[#f5f9fc]">
      <div>
        <Unchanged />
        <Row n="5" depth={1}>{comment}</Row>
        <Row n="6" depth={1}>{card}</Row>
        <Row n="7" depth={2}>
          <span>{"        "}<Pun>&lt;</Pun><Tag>div</Tag> <Attr>class=</Attr><Str>"card-</Str></span>
          <Str>header d-flex justify-</Str>
          <Str>content-between align-</Str>
          <span><Str>items-center"</Str><Pun>&gt;</Pun></span>
        </Row>
        <Row n="8" depth={3} tone="bg-[#2b202e]">
          <span>{"            "}<Pun>&lt;</Pun><Del><Tag>h5</Tag></Del><Pun>&gt;</Pun>Open</span>
          <span>Orders <Pun>&lt;</Pun><Tag>i</Tag> <Attr>class=</Attr><Str>"bi bi-</Str></span>
          <Str>arrow-clockwise refresh-</Str>
          <Str>btn"</Str>
          <span><Attr>onclick=</Attr><Str>"</Str><Fn>updateOrders</Fn>()<Str>"</Str><Pun>&gt;</Pun></span>
          <span><Pun>&lt;/</Pun><Tag>i</Tag><Del><Pun>&gt;&lt;/</Pun><Tag>h5</Tag></Del><Pun>&gt;</Pun></span>
        </Row>
      </div>
      <div className="pl-[6px]">
        <Unchanged />
        <Row n="5" depth={1}>{comment}</Row>
        <Row n="6" depth={1}>{card}</Row>
        <Row n="7" depth={2}>
          <span>{"        "}<Pun>&lt;</Pun><Tag>div</Tag></span>
          <span><Attr>class=</Attr><Str>"card-header d-</Str></span>
          <Str>flex justify-content-</Str>
          <Str>between align-items-</Str>
          <span><Str>center"</Str><Pun>&gt;</Pun></span>
        </Row>
        <Row n="8" depth={3} tone={green}>
          <span>{"            "}<Pun>&lt;</Pun><Add><Tag>div </Tag></Add></span>
          <Add><Attr>class=</Attr><Str>"d-flex align-</Str></Add>
          <Add><Str>items-center"</Str><Pun>&gt;</Pun></Add>
        </Row>
        <Row n="9" depth={4} tone={green}>
          <Add>{"                "}<Pun>&lt;</Pun><Tag>h5 </Tag></Add>
          <span><Add><Attr>class=</Attr><Str>"me-3"</Str></Add><Pun>&gt;</Pun>Open</span>
          <span>Orders<Add><Pun>&lt;/</Pun><Tag>h5</Tag><Pun>&gt;</Pun></Add></span>
        </Row>
        <Row n="10" depth={4} tone={green}>
          <Add>{"                "}<Pun>&lt;</Pun><Tag>select </Tag></Add>
          <Add><Attr>id=</Attr><Str>"orderLimit" </Str></Add>
          <Add><Attr>class=</Attr><Str>"form-select form-</Str></Add>
          <Add><Str>select-sm" </Str></Add>
          <Add><Attr>style=</Attr><Str>"</Str><Attr>width</Attr>: <Tag>auto</Tag>;<Str>" </Str></Add>
          <Add><Attr>onchange=</Attr><Str>"</Str><Fn>updateOrders</Fn>()</Add>
          <Add><Str>"</Str><Pun>&gt;</Pun></Add>
        </Row>
        <Row n="11" depth={5} tone={green}>
          <Add>{"                    "}</Add>
          <Add><Pun>&lt;</Pun><Tag>option</Tag> <Attr>value=</Attr><Str>"10"</Str><Pun>&gt;</Pun>Show </Add>
          <Add>10<Pun>&lt;/</Pun><Tag>option</Tag><Pun>&gt;</Pun></Add>
        </Row>
        <Row n="12" depth={5} tone={green}>
          <Add>{"                    "}</Add>
        </Row>
      </div>
    </div>
  );
}

function DiffPane() {
  return (
    <section className="flex min-w-0 flex-[725] flex-col overflow-hidden rounded-md bg-[#1c2333]">
      <div className="flex h-[41px] shrink-0 text-[16px]">
        <span className="w-[10px] border-r border-b border-[#2b3245] bg-[#171d2d]" />
        <PaneTab width="w-[176px]" icon={<StorageIcon className="h-5 w-[18px]" />} label="Object Storage" />
        <PaneTab width="w-[127px]" icon={<ConsoleIcon className="size-4" />} label="Console" />
        <PaneTab width="w-[135px]" icon={<Monitor className="size-[18px] text-[#8f959d]" strokeWidth={1.500} />} label="Webview" />
        <PaneTab width="w-[187px]" active line icon={<GitCommitHorizontal className="size-5" strokeWidth={1.500} />} label="Diff: orders.html" />
        <PaneTabsEnd />
      </div>
      <div className="flex min-h-0 flex-1 pl-[10px]">
        <div className="flex min-w-0 flex-1 flex-col pt-[9px]">
          <div className="flex h-10 w-[160px] shrink-0 overflow-hidden rounded-md bg-[#2b3245] text-[17px]">
            <button className="flex-1 text-[#c2c8cc]">Unified</button>
            <button className="flex-1 rounded-md bg-[#3c445c]">Split</button>
          </div>
          <button className="mt-[10px] flex h-10 shrink-0 items-center rounded-t-md bg-[#2b3245] pr-3 pl-[9px] text-[18px]">
            <FaHtml5 className="mr-3 size-5" color="#b55a06" />templates/orders.html
            <ChevronUp className="ml-auto size-[18px]" />
          </button>
          <DiffCode />
        </div>
        <div className="flex w-[29px] flex-col items-center py-2 pl-[9px]">
          <span className="size-0 border-x-[7px] border-b-8 border-x-transparent border-b-[#3c445c]" />
          <span className="mt-2 h-[270px] w-[11px] rounded-full bg-[#3c445c]" />
          <span className="mt-auto size-0 border-x-[7px] border-t-8 border-x-transparent border-t-[#3c445c]" />
        </div>
      </div>
    </section>
  );
}

/* ---------- right taskbar ---------- */

const APPS = [
  ["VS Code", false, (
    <svg viewBox="0 0 30 30" className="size-[30px]"><path fill="#0b76c4" d="m1 9 3-2 19 15v6zM1 21l3 2L23 8V2z" /><path fill="#2aa5ef" d="m22 0 8 4v22l-8 4z" /></svg>
  )],
  ["TeamViewer", false, (
    <svg viewBox="0 0 30 30" className="size-[30px]"><rect width="30" height="30" rx="4" fill="#0a0a50" /><circle cx="15" cy="15" r="12.500" fill="#fff" /><path fill="#0a0a50" d="m4 15 6-5v3.500h10V10l6 5-6 5v-3.500H10V20z" /></svg>
  )],
  ["Remote desktop", false, (
    <svg viewBox="0 0 30 30" className="size-[30px]"><rect width="30" height="30" rx="5" fill="#35d341" /><path fill="#2b2b2b" stroke="#ddd" d="M4 6h22v12H4z" /><path fill="#fff" d="M13 18h4v4h3v2H10v-2h3z" /></svg>
  )],
  ["Excel", true, (
    <svg viewBox="0 0 30 30" className="size-[30px]"><path fill="#21a366" d="M8 1h22v28H8z" /><path fill="#33c481" d="M19 1h11v9H19z" /><path fill="#107c41" d="M8 10h22v10H8z" /><path fill="#185c37" d="M8 20h22v9H8z" /><rect y="7" width="16" height="16" rx="1" fill="#107c41" /><path stroke="#fff" strokeWidth="2.200" d="m5 11 6 8M11 11l-6 8" /></svg>
  )],
  ["Files", true, (
    <svg viewBox="0 0 30 30" className="size-[30px]"><path fill="#e8a317" d="M1 3h11l3 4H1z" /><path fill="#ffd35c" d="M1 6h28v20H1z" /><path fill="#2f8fe0" d="M6 26v-8l3-3h12l3 3v8h-5v-5h-8v5z" /></svg>
  )],
  ["Windsurf", true, (
    <svg viewBox="0 0 30 30" className="size-[30px]"><rect width="30" height="30" rx="2" fill="#101513" /><path fill="#3fdca8" d="M8 5c5 0 8 1 10 5-4 0-8-1-10-5zM9 11c5 0 8 1 10 5-4 0-8-1-10-5zM10 17c5 0 7 1 10 4-4 0-8 0-10-4zM14 22c3 0 4 1 6 4-3 0-5-1-6-4z" /></svg>
  )],
  ["Cursor", false, (
    <svg viewBox="0 0 30 30" className="size-[30px]"><rect x="3" y="3" width="24" height="24" rx="6" fill="#000" /><path fill="#aaa" d="m15 7 7 4v8l-7 4-7-4v-8z" /><path fill="#fff" d="M8 11h14l-7 12v-8z" /></svg>
  )],
  ["Notepad", true, (
    <svg viewBox="0 0 30 30" className="size-[30px]"><path fill="#c9a05a" d="m24 4 4 1-3 23-6-1z" /><path fill="#8fd3de" d="m9 2 17 1-6 24L2 21z" /><path fill="#e8f5f7" d="m9 2 17 1-1 4L8 5z" /></svg>
  )],
  ["Citrix", true, (
    <svg viewBox="0 0 30 30" className="size-[30px]" fill="none" stroke="#fff" strokeWidth="2.500"><circle cx="15" cy="15" r="15" fill="#2b6fc9" stroke="none" /><path d="M22 22A10 10 0 1 1 25 14M19 19a5.500 5.500 0 1 1 1-6" /><circle cx="15" cy="15" r="1" /></svg>
  )],
  ["Claude", true, (
    <svg viewBox="0 0 30 30" className="size-[30px]"><rect width="30" height="30" rx="3" fill="#e0704a" /><path stroke="#fff" strokeWidth="1.800" d="M15 4v22M4 15h22M7 7l16 16M23 7 7 23M11 5l8 20M19 5l-8 20M5 11l20 8M25 11 5 19" /></svg>
  )],
  ["Outlook", true, (
    <svg viewBox="0 0 32 30" className="h-[30px] w-8"><path fill="#1a86d9" d="M6 8 18 0l12 8v16H6z" /><path fill="#37b1f1" d="m12 6 8-5 10 7-8 6z" /><rect y="7" width="15" height="15" rx="1" fill="#0f6cc4" /><circle cx="7.500" cy="14.500" r="4" fill="none" stroke="#fff" strokeWidth="2" /><circle cx="23" cy="21" r="9" fill="#4fc3f7" /><path fill="none" stroke="#0b2b3d" strokeWidth="1.500" d="M18 17h10v8H18zM18 17l5 4 5-4" /></svg>
  )],
  ["Telegram", true, (
    <span className="relative">
      <svg viewBox="0 0 28 28" className="size-7"><circle cx="14" cy="14" r="14" fill="#2a9fda" /><path fill="#fff" d="m5 14 17-7-3 15-5-4-3 3v-5l7-6-9 5z" /></svg>
      <span className="absolute -right-[5px] -bottom-[4px] rounded-full bg-[#e8413b] px-[2px] text-[10px] leading-[14px] text-white">172</span>
    </span>
  )],
];

function RightTaskbar() {
  return (
    <footer className="flex h-[50px] shrink-0 items-stretch bg-linear-to-r from-[#26251f] via-[#302c2a] via-50% to-[#2b2a1f] text-white">
      <button aria-label="Start" className="grid w-[60px] place-items-center"><WindowsLogo className="size-5" /></button>
      <label className="flex w-[360px] items-center gap-[15px] border border-[#bdbdbd] bg-[#f1f1f1] pl-[14px]">
        <MagnifierIcon className="size-5 shrink-0" />
        <input aria-label="Taper ici pour rechercher" placeholder="Taper ici pour rechercher" className="min-w-0 flex-1 text-[17px] text-black outline-none placeholder:text-[#333]" />
      </label>
      <button aria-label="Task view" className="grid w-16 place-items-center"><TaskViewIcon className="size-[21px]" /></button>
      <button aria-label="Chrome" className="flex w-[61px] items-center border-b-[3px] border-[#76b9ed] bg-[#55564c] pl-[15px]"><ChromeLogo className="size-[30px]" /></button>
      {APPS.map(([name, open, icon]) => (
        <button key={name} aria-label={name} className="flex w-[62px] flex-col items-center pt-[10px]">
          <span className="h-[30px]">{icon}</span>
          <span className={`mt-auto h-[3px] w-[51px] ${open ? "bg-[#76b9ed]" : ""}`} />
        </button>
      ))}
      <div className="ml-auto flex items-center gap-[11px]">
        <ChevronUp className="size-5" strokeWidth={1.500} />
        <Video className="size-[18px]" strokeWidth={1.500} />
        <Cloud className="size-5" fill="#ddd" />
        <Wifi className="size-[18px] rotate-45" strokeWidth={1.500} />
        <VolumeX className="size-5" strokeWidth={1.500} />
        <div className="ml-1 flex flex-col items-center text-[14px] leading-[23px]">
          <span>18:45</span>
          <span>25/03/2025</span>
        </div>
      </div>
      <button aria-label="Notifications" className="relative ml-6 w-[46px]">
        <svg viewBox="0 0 20 20" className="size-5"><path fill="#fff" d="M0 0h20v16h-8l-4 4v-4H0z" /><path stroke="#333" strokeWidth="1.500" d="M4 4.500h12M4 8h12M4 11.500h12" /></svg>
        <span className="absolute top-[25px] left-[9px] grid size-5 place-items-center rounded-full border border-[#999] bg-[#333] text-[12px]">3</span>
      </button>
      <span className="mr-1 w-px bg-[#8b8b85]" />
    </footer>
  );
}

export default function App() {
  return (
    <main className="grid h-screen grid-cols-2 overflow-hidden bg-white font-['Open_Sans',sans-serif]">
      <div className="flex min-h-0 min-w-0 flex-col pt-[63px]">
        <LeftBrowser />
        <Dashboard />
        <LeftTaskbar />
      </div>
      <div className="flex min-h-0 min-w-0 flex-col pb-[63px]">
        <RightBrowser />
        <div className="flex min-h-0 flex-1 flex-col bg-[#0e1525] font-['Roboto',sans-serif] text-[#f5f9fc]">
          <WorkspaceHeader />
          <div className="flex min-h-0 flex-1 pr-[10px] pb-[11px]">
            <Rail />
            <FilesPanel />
            <Splitter />
            <AssistantPane />
            <Splitter />
            <DiffPane />
          </div>
        </div>
        <RightTaskbar />
      </div>
    </main>
  );
}
